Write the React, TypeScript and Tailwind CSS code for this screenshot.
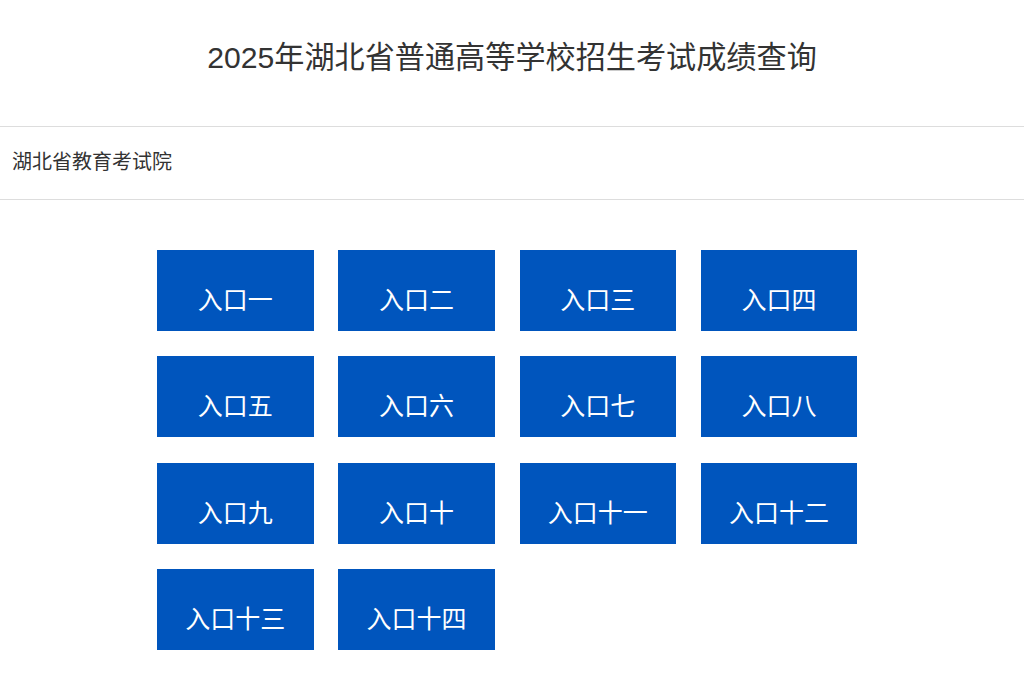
import React from 'react';

const entries = [
  '入口一', '入口二', '入口三', '入口四',
  '入口五', '入口六', '入口七', '入口八',
  '入口九', '入口十', '入口十一', '入口十二',
  '入口十三', '入口十四',
];

const font = { fontFamily: '"Liberation Sans", "Noto Sans CJK SC", sans-serif' };

const App: React.FC = () => {
  return (
    <div className="min-h-screen bg-white text-[#333]" style={font}>
      {/* page title */}
      <header className="flex h-[126px] items-center justify-center pb-[10px]">
        <h1 className="text-[30.15px] leading-none">2025年湖北省普通高等学校招生考试成绩查询</h1>
      </header>

      <div className="flex h-[74px] items-center border-y border-[#ddd] px-3 pb-[3px]">
        <span className="text-[20px] leading-none">湖北省教育考试院</span>
      </div>

      {/* query entry grid */}
      <div className="grid w-[700px] grid-cols-4 gap-x-[25px] gap-y-[25.4px] pt-[50px] ml-[157px]">
        {entries.map((label) => (
          <a
            key={label}
            href="#"
            className="flex h-[81px] w-[156.5px] items-center justify-center bg-[#0055bd] pt-5 text-[25px] leading-none text-white"
          >
            {label}
          </a>
        ))}
      </div>
    </div>
  );
};

export default App;
